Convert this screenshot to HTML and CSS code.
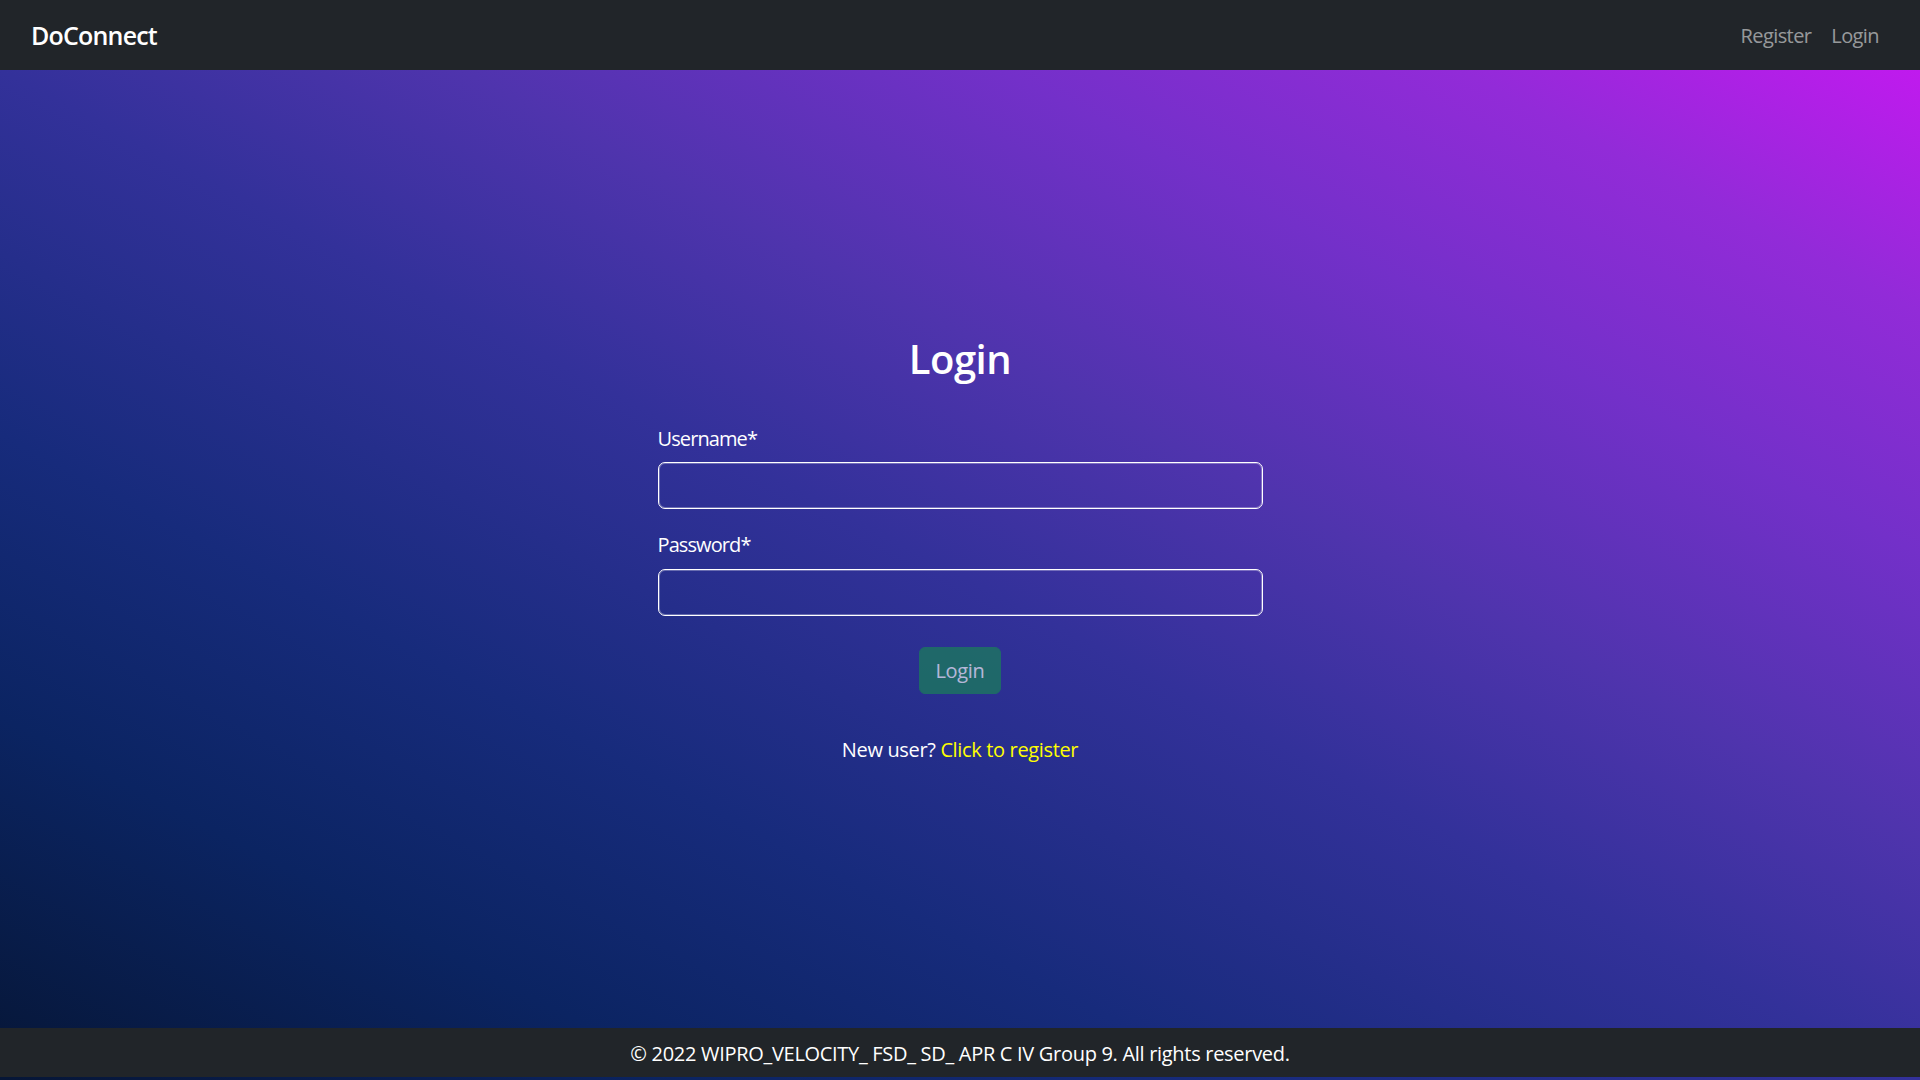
FILE: index.html
```html
<!DOCTYPE html>
<html lang="en">
<head>
<meta charset="utf-8">
<title>DoConnect</title>
<link rel="stylesheet" href="styles.css">
</head>
<body>
<div class="page">
  <nav class="navbar">
    <a class="brand" href="#">DoConnect</a>
    <ul class="nav-links">
      <li><a class="nav-link" href="#">Register</a></li>
      <li><a class="nav-link" href="#">Login</a></li>
    </ul>
  </nav>
  <div class="content">
    <main class="main">
      <form class="login-form">
        <h2 class="title">Login</h2>
        <label class="form-label" for="username">Username*</label>
        <input class="form-control" id="username" type="text">
        <label class="form-label second" for="password">Password*</label>
        <input class="form-control" id="password" type="password">
        <div class="actions">
          <button class="btn" type="button" disabled>Login</button>
        </div>
        <p class="new-user">New user? <a class="register-link" href="#">Click to register</a></p>
      </form>
    </main>
    <footer class="footer">© 2022 WIPRO_VELOCITY_ FSD_ SD_ APR C IV Group 9. All rights reserved.</footer>
  </div>
</div>
</body>
</html>
```
FILE: styles.css
```css
* { box-sizing: border-box; }
html, body { margin: 0; padding: 0; }
body {
  font-family: "Open Sans", "Noto Sans", "Liberation Sans", sans-serif;
  color: #fff;
  background: #212529;
}
.page {
  height: 1080px;
  display: flex;
  flex-direction: column;
}
.navbar {
  height: 70px;
  flex: 0 0 70px;
  background: #212529;
  display: flex;
  align-items: center;
  justify-content: space-between;
  padding: 0 31px;
}
.brand {
  font-size: 25px;
  font-weight: 600;
  color: #fff;
  text-decoration: none;
  letter-spacing: -0.8px;
}
.nav-links {
  list-style: none;
  margin: 0;
  padding: 0;
  display: flex;
}
.nav-link {
  display: block;
  padding: 0 10px;
  font-size: 20px;
  color: rgba(255, 255, 255, 0.55);
  text-decoration: none;
  letter-spacing: -0.6px;
}
.content {
  flex: 1;
  display: flex;
  flex-direction: column;
  background: linear-gradient(to top right,
    #061636 0%,
    #0b2462 18%,
    #172b7c 32%,
    #33319a 50%,
    #4f34ad 62%,
    #7330c9 76%,
    #922bd8 88%,
    #c01aee 100%);
}
.main {
  flex: 1;
  display: flex;
  align-items: center;
  justify-content: center;
}
.login-form {
  width: 605px;
  display: flex;
  flex-direction: column;
  padding-top: 2px;
}
.title {
  margin: 0 0 41px;
  font-size: 40px;
  line-height: 48px;
  font-weight: 600;
  text-align: center;
  letter-spacing: -0.5px;
}
.form-label {
  font-size: 20px;
  line-height: 30px;
  margin-bottom: 8px;
  letter-spacing: -0.9px;
}
.form-label.second {
  margin-top: 21px;
  margin-bottom: 9px;
}
.form-control {
  height: 47px;
  width: 100%;
  background: transparent;
  border: 1px solid #fff;
  box-shadow: inset 0 0 0 1px rgba(255, 255, 255, 0.3);
  border-radius: 7px;
  color: #fff;
  font-size: 20px;
  padding: 7px 15px;
  font-family: inherit;
}
.actions {
  display: flex;
  justify-content: center;
  margin-top: 31px;
}
.btn {
  height: 47px;
  padding: 0 15px;
  font-family: inherit;
  font-size: 20px;
  color: #fff;
  background: #198754;
  border: 1px solid #198754;
  border-radius: 6px;
  opacity: 0.65;
  letter-spacing: -0.3px;
}
.new-user {
  margin: 41px 0 0;
  font-size: 20px;
  line-height: 30px;
  text-align: center;
  letter-spacing: -0.35px;
}
.register-link {
  color: #ffff00;
  text-decoration: none;
}
.footer {
  height: 49px;
  flex: 0 0 49px;
  margin-bottom: 3px;
  padding-top: 2px;
  background: #212529;
  display: flex;
  align-items: center;
  justify-content: center;
  font-size: 20px;
  letter-spacing: -0.3px;
}
```
